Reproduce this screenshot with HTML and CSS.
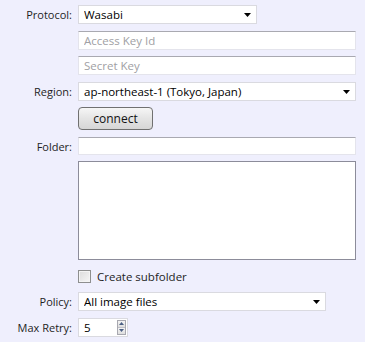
FILE: index.html
```html
<!DOCTYPE html>
<html lang="en">
<head>
    <meta charset="UTF-8">
    <title>Upload Settings</title>
    <link rel="stylesheet" href="styles.css">
</head>
<body>
    <form class="settings">
        <label class="label">Protocol:</label>
        <div class="select-box short">
            <select class="select"><option>Wasabi</option></select>
            <svg class="arrow" width="7" height="4" viewBox="0 0 7 4"><path d="M0 0H7L3.5 4Z" fill="#000"/></svg>
        </div>

        <span></span>
        <input class="text" type="text" placeholder="Access Key Id">

        <span></span>
        <input class="text" type="text" placeholder="Secret Key">

        <label class="label">Region:</label>
        <div class="select-box">
            <select class="select"><option>ap-northeast-1 (Tokyo, Japan)</option></select>
            <svg class="arrow" width="7" height="4" viewBox="0 0 7 4"><path d="M0 0H7L3.5 4Z" fill="#000"/></svg>
        </div>

        <span></span>
        <div><button class="btn" type="button">connect</button></div>

        <label class="label">Folder:</label>
        <input class="text" type="text">

        <span></span>
        <textarea class="area"></textarea>

        <span></span>
        <label class="check-row"><input class="check" type="checkbox"> Create subfolder</label>

        <label class="label">Policy:</label>
        <div class="select-box mid">
            <select class="select"><option>All image files</option></select>
            <svg class="arrow" width="7" height="4" viewBox="0 0 7 4"><path d="M0 0H7L3.5 4Z" fill="#000"/></svg>
        </div>

        <label class="label">Max Retry:</label>
        <div class="spin">
            <input class="spin-input" type="text" value="5">
            <div class="spin-btns">
                <span class="spin-btn"><svg width="5" height="3" viewBox="0 0 5 3"><path d="M0 3H5L2.5 0Z" fill="#4a5f84"/></svg></span>
                <span class="spin-btn"><svg width="5" height="3" viewBox="0 0 5 3"><path d="M0 0H5L2.5 3Z" fill="#4a5f84"/></svg></span>
            </div>
        </div>
    </form>
</body>
</html>
```

FILE: styles.css
```css
* {
    box-sizing: border-box;
    margin: 0;
    padding: 0;
}
html, body {
    height: 100%;
    background: #efeffd;
}
body {
    font-family: 'Open Sans', sans-serif;
    font-size: 11.5px;
    color: #1e1e1e;
}
.settings {
    display: grid;
    grid-template-columns: 72px 1fr;
    grid-template-rows: 19px 19px 19px 19px 23px 18px 99px 19px 19px 19px;
    column-gap: 6px;
    row-gap: 6.5px;
    padding: 5px 9px 0 0;
}
.label {
    text-align: right;
    font-size: 11px;
    line-height: 19px;
}
.select-box {
    position: relative;
    height: 19px;
}
.select-box.short {
    width: 179px;
}
.select-box.mid {
    width: 248px;
}
.select {
    appearance: none;
    width: 100%;
    height: 100%;
    border: 1px solid #dadae0;
    background: #fff;
    font: inherit;
    color: #000;
    padding: 0 0 0 5px;
    outline: none;
}
.arrow {
    position: absolute;
    right: 6px;
    top: 8px;
    pointer-events: none;
}
.text {
    height: 100%;
    border: 1px solid #e4e4ec;
    border-top-color: #a9a9b1;
    background: #fff;
    font: inherit;
    color: #000;
    padding: 0 5px;
    outline: none;
}
.text::placeholder {
    color: #a0a0a4;
}
.btn {
    width: 75px;
    height: 23px;
    border: 1px solid #707070;
    border-radius: 4px;
    background: linear-gradient(#f6f6f6, #e4e4e4 50%, #d6d6d6);
    font-family: 'Open Sans', sans-serif;
    font-size: 12px;
    color: #111;
}
.area {
    height: 100%;
    border: 1px solid #8c8c9a;
    background: #fff;
    resize: none;
    outline: none;
}
.check-row {
    display: flex;
    align-items: center;
    gap: 6px;
}
.check {
    appearance: none;
    width: 13px;
    height: 13px;
    border: 1px solid #8e8f8f;
    background: linear-gradient(135deg, #dcdcdc, #f6f6f6);
    box-shadow: inset 0 0 0 1px #f4f4f4;
}
.spin {
    display: flex;
    width: 50px;
    height: 19px;
    border: 1px solid #dadae0;
    background: #fff;
}
.spin-input {
    width: 38px;
    border: none;
    font: inherit;
    color: #000;
    padding: 0 5px;
    outline: none;
}
.spin-btns {
    display: flex;
    flex-direction: column;
    border: 1px solid #a8a8b0;
    margin: 1px 1px 1px 0;
    width: 10px;
}
.spin-btn {
    flex: 1;
    display: flex;
    align-items: center;
    justify-content: center;
    background: linear-gradient(#f4f4f4, #dedede);
}
.spin-btn + .spin-btn {
    border-top: 1px solid #c0c0c8;
}
```
